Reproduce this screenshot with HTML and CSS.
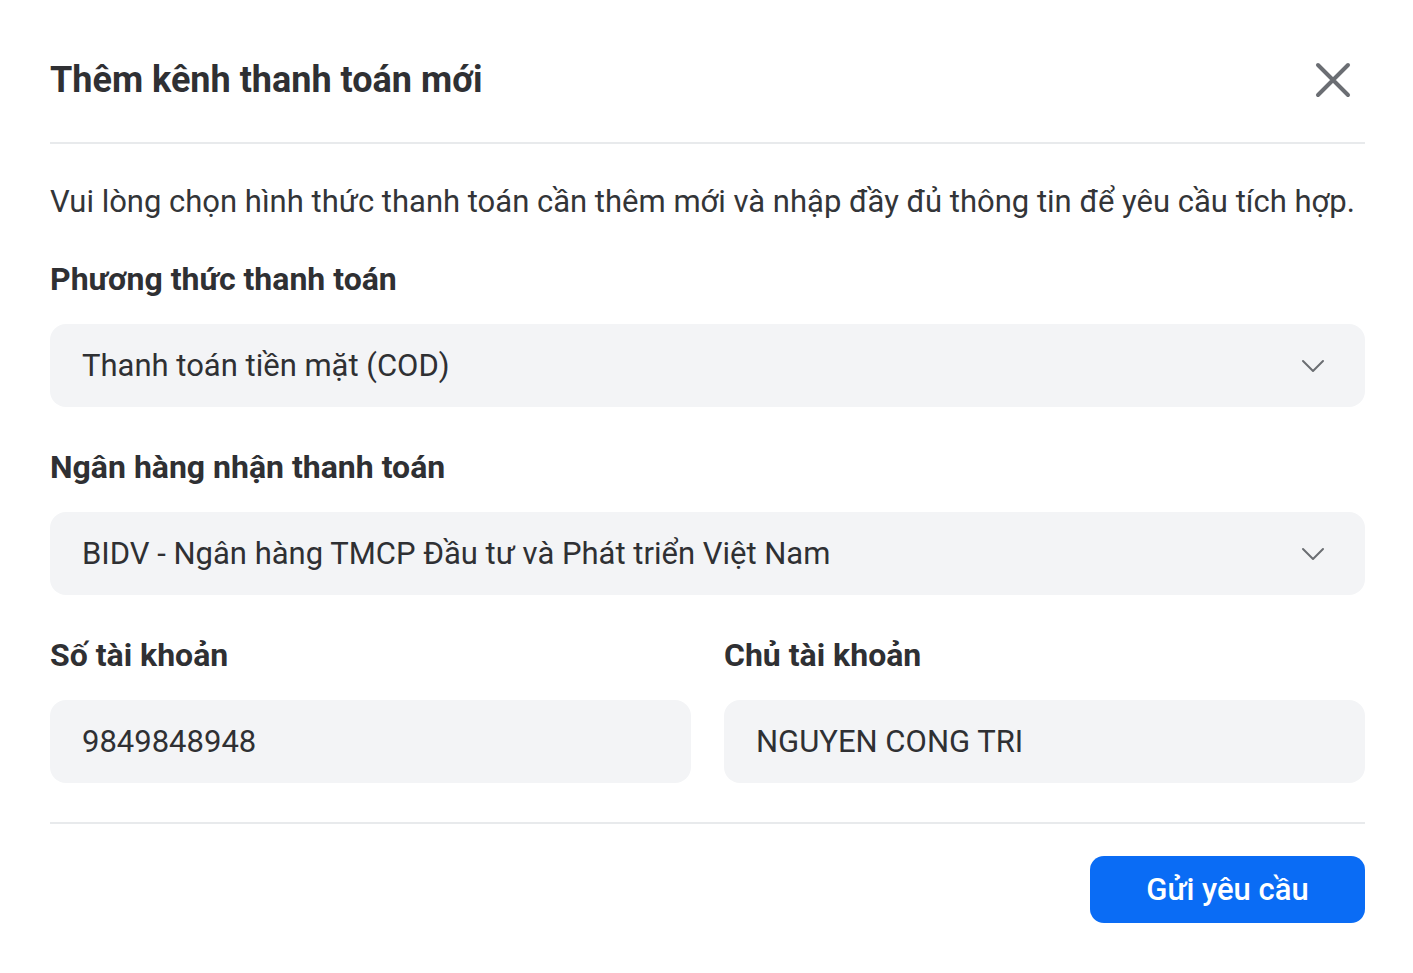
FILE: index.html
```html
<!DOCTYPE html>
<html lang="vi">
<head>
<meta charset="utf-8">
<title>Thêm kênh thanh toán mới</title>
<link rel="stylesheet" href="styles.css">
</head>
<body>
<div class="modal">
  <header class="modal-header">
    <h1 class="modal-title">Thêm kênh thanh toán mới</h1>
    <button class="close-btn" aria-label="Đóng">
      <svg width="36" height="36" viewBox="0 0 36 36"><path d="M3 3 L33 33 M33 3 L3 33" stroke="#6b6e73" stroke-width="4" stroke-linecap="round" fill="none"/></svg>
    </button>
  </header>
  <div class="modal-body">
    <p class="desc">Vui lòng chọn hình thức thanh toán cần thêm mới và nhập đầy đủ thông tin để yêu cầu tích hợp.</p>
    <div class="field">
      <label class="label">Phương thức thanh toán</label>
      <div class="input select">
        <span>Thanh toán tiền mặt (COD)</span>
        <svg class="chev" width="24" height="14" viewBox="0 0 24 14"><path d="M2 2 L12 12 L22 2" stroke="#6b6e73" stroke-width="2" fill="none" stroke-linecap="round" stroke-linejoin="round"/></svg>
      </div>
    </div>
    <div class="field">
      <label class="label">Ngân hàng nhận thanh toán</label>
      <div class="input select">
        <span>BIDV - Ngân hàng TMCP Đầu tư và Phát triển Việt Nam</span>
        <svg class="chev" width="24" height="14" viewBox="0 0 24 14"><path d="M2 2 L12 12 L22 2" stroke="#6b6e73" stroke-width="2" fill="none" stroke-linecap="round" stroke-linejoin="round"/></svg>
      </div>
    </div>
    <div class="row">
      <div class="field">
        <label class="label">Số tài khoản</label>
        <div class="input"><span>9849848948</span></div>
      </div>
      <div class="field">
        <label class="label">Chủ tài khoản</label>
        <div class="input"><span>NGUYEN CONG TRI</span></div>
      </div>
    </div>
  </div>
  <footer class="modal-footer">
    <button class="submit">Gửi yêu cầu</button>
  </footer>
</div>
</body>
</html>
```

FILE: styles.css
```css
* { box-sizing: border-box; }
html, body { margin: 0; padding: 0; background: #fff; }
body { font-family: Roboto, "Noto Sans", sans-serif; color: #2f3033; }
.modal { padding: 0 48px 0 50px; }
.modal-header {
  display: flex; align-items: center; justify-content: space-between;
  padding: 56px 0 38px; border-bottom: 2px solid #e8eaec;
}
.modal-title { margin: 0; font-size: 36px; line-height: 48px; font-weight: 700; color: #2f3033; }
.close-btn { border: 0; background: none; padding: 0; margin-right: 14px; width: 36px; height: 36px; display: flex; cursor: pointer; }
.modal-body { padding-top: 38px; padding-bottom: 39px; border-bottom: 2px solid #e8eaec; }
.desc { margin: 0 0 37px; font-size: 31px; line-height: 40px; color: #333538; }
.field { display: flex; flex-direction: column; margin-bottom: 40px; }
.row .field { margin-bottom: 0; }
.label { font-size: 32px; line-height: 40px; font-weight: 700; margin-bottom: 25px; color: #2f3033; }
.input {
  height: 83px; background: #f3f4f6; border-radius: 16px;
  display: flex; align-items: center; justify-content: space-between;
  padding: 0 40px 0 32px; font-size: 31px; color: #2f3033;
}
.row { display: grid; grid-template-columns: 1fr 1fr; gap: 33px; }
.modal-footer { display: flex; justify-content: flex-end; padding: 32px 0 50px; }
.submit {
  width: 275px; height: 67px; border: 0; border-radius: 14px;
  background: #0a6cf5; color: #fff; font-family: Roboto, sans-serif;
  font-size: 31px; font-weight: 500;
}
```
